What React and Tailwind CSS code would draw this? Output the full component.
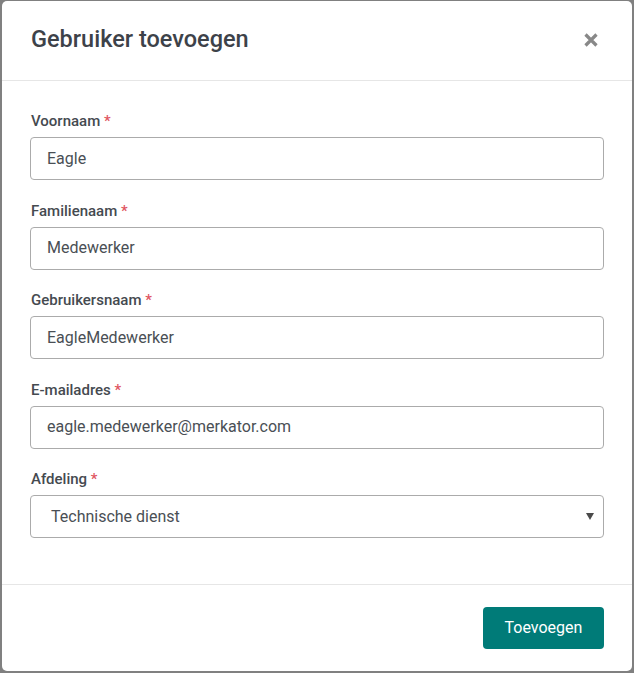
import React from "react";

const fields = [
  { label: "Voornaam", value: "Eagle" },
  { label: "Familienaam", value: "Medewerker" },
  { label: "Gebruikersnaam", value: "EagleMedewerker" },
  { label: "E-mailadres", value: "eagle.medewerker@merkator.com" },
];

export default function App() {
  return (
    <div
      className="w-[634px] h-[673px] bg-[#808080] pt-px pl-[2px]"
      style={{ fontFamily: "Roboto, 'Noto Sans', sans-serif" }}
    >
      <div className="w-[630px] h-[670px] bg-white rounded-[5px] flex flex-col">
        <div className="h-[80px] flex items-center justify-between pl-[29px] pr-[33px] border-b border-[#e6e6e6]">
          <h1 className="text-[23.5px] font-medium text-[#3d4249] leading-none pb-[1px]">
            Gebruiker toevoegen
          </h1>
          <svg width="16" height="16" viewBox="0 0 16 16" className="mb-[1px]">
            <path d="M2.5 2.5 L13.5 13.5 M13.5 2.5 L2.5 13.5" stroke="#888" strokeWidth="3.2" strokeLinecap="butt" />
          </svg>
        </div>
        <div className="flex-1 pl-[28px] pr-[28px] pt-[30px] flex flex-col gap-[20.5px]">
          {fields.map((f) => (
            <div key={f.label} className="flex flex-col">
              <label className="text-[15px] font-medium text-[#454a50] leading-[20px] mb-[6px] pl-[1px]">
                {f.label} <span className="text-[#e05561]">*</span>
              </label>
              <div className="h-[43px] border border-[#ababab] rounded-[4px] flex items-center pl-[16px] text-[16px] text-[#4a4f55]">
                {f.value}
              </div>
            </div>
          ))}
          <div className="flex flex-col">
            <label className="text-[15px] font-medium text-[#454a50] leading-[20px] mb-[6px] pl-[1px]">
              Afdeling <span className="text-[#e05561]">*</span>
            </label>
            <div className="h-[43px] border border-[#ababab] rounded-[4px] flex items-center justify-between pl-[20px] pr-[9px] text-[16px] text-[#4a4f55]">
              <span>Technische dienst</span>
              <svg width="8" height="7" viewBox="0 0 8 7">
                <path d="M0 0 H8 L4 7 Z" fill="#4a4a4a" />
              </svg>
            </div>
          </div>
        </div>
        <div className="h-[87px] border-t border-[#e6e6e6] flex items-center justify-end pr-[28px]">
          <button className="w-[121px] h-[42px] bg-[#007b78] rounded-[4px] text-white text-[16px] font-normal">
            Toevoegen
          </button>
        </div>
      </div>
    </div>
  );
}
